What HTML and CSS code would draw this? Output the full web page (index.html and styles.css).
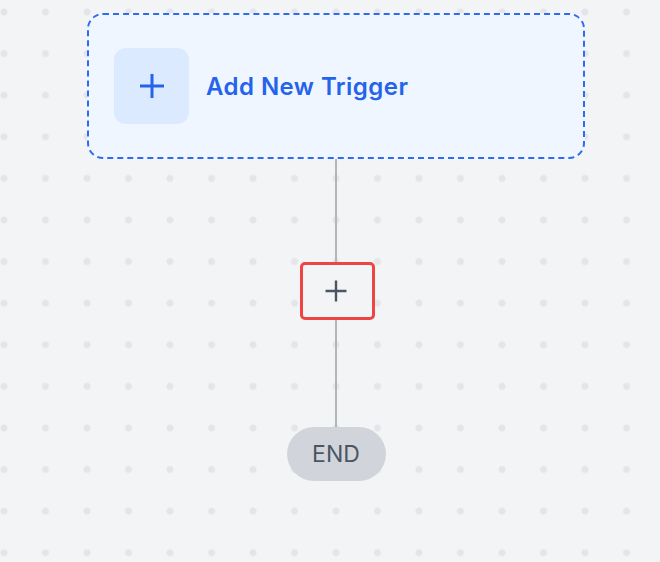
FILE: index.html
```html
<!DOCTYPE html>
<html>
<head>
<meta charset="utf-8">
<link rel="stylesheet" href="styles.css">
</head>
<body>
<div class="canvas">
  <div class="flow">
    <div class="trigger-card">
      <div class="trigger-icon">
        <svg width="28" height="28" viewBox="0 0 28 28"><path d="M14 2v24M2 14h24" stroke="#2563eb" stroke-width="3" fill="none"/></svg>
      </div>
      <span class="trigger-label">Add New Trigger</span>
    </div>
    <div class="edge edge-top"></div>
    <div class="add-step">
      <svg width="24" height="24" viewBox="0 0 24 24"><path d="M12 1.5v21M1.5 12h21" stroke="#4b5563" stroke-width="2.4" fill="none"/></svg>
    </div>
    <div class="edge edge-bottom"></div>
    <div class="end-node">END</div>
  </div>
</div>
</body>
</html>
```
FILE: styles.css
```css
html, body {
  margin: 0;
  padding: 0;
}
body {
  width: 660px;
  height: 562px;
  overflow: hidden;
  font-family: Inter, "Noto Sans", sans-serif;
}
.canvas {
  width: 660px;
  height: 562px;
  background-color: #f3f4f6;
  background-image: radial-gradient(circle at center, #e4e5e9 0, #e4e5e9 3px, rgba(228,229,233,0) 4px);
  background-size: 41.5px 41.6px;
  background-position: -16.75px -8.8px;
  box-sizing: border-box;
  padding: 13px 0 0 12px;
}
.flow {
  display: flex;
  flex-direction: column;
  align-items: center;
}
.trigger-card {
  box-sizing: border-box;
  width: 498px;
  height: 146px;
  border: 2px dashed #2f6bef;
  border-radius: 16px;
  background: #eff6ff;
  display: flex;
  align-items: center;
  padding-left: 25px;
  gap: 17px;
}
.trigger-icon {
  width: 75px;
  height: 76px;
  border-radius: 12px;
  background: #dbeafe;
  display: flex;
  align-items: center;
  justify-content: center;
}
.trigger-icon svg { display: block; }
.trigger-label {
  font-size: 24px;
  font-weight: 600;
  color: #2563eb;
  letter-spacing: 0.45px;
}
.edge {
  width: 2px;
  background: #b4b5ba;
}
.edge-top { height: 103px; }
.edge-bottom { height: 107px; }
.add-step {
  box-sizing: border-box;
  width: 75px;
  height: 58px;
  margin-left: 2px;
  border: 3px solid #ef4444;
  border-radius: 5px;
  background: #f3f4f6;
  display: flex;
  align-items: center;
  justify-content: center;
}
.add-step svg { display: block; margin-left: -2px; }
.end-node {
  width: 99px;
  height: 54px;
  border-radius: 27px;
  background: #d1d5db;
  color: #4b5563;
  font-size: 23px;
  display: flex;
  align-items: center;
  justify-content: center;
}
```
